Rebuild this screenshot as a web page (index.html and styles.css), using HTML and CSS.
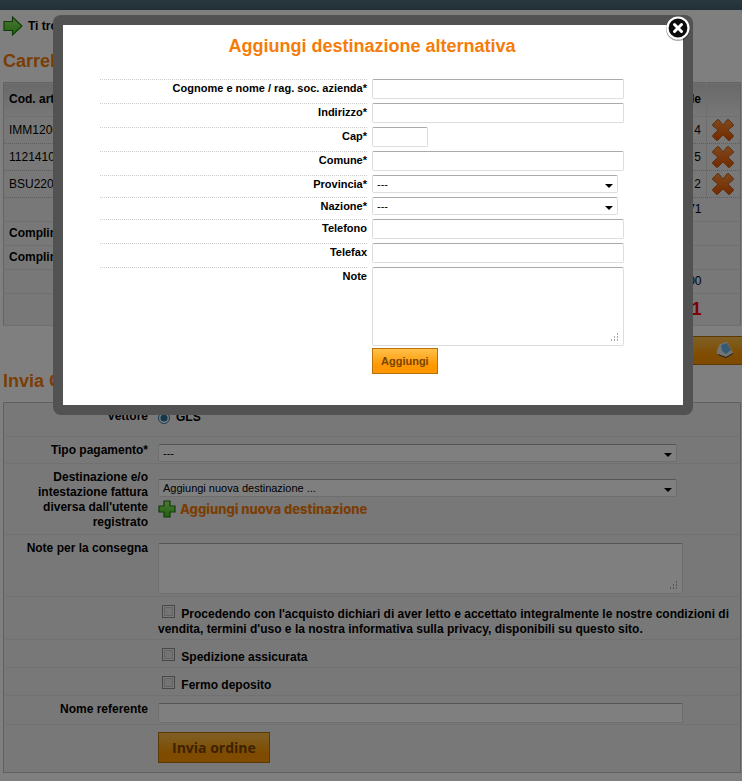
FILE: index.html
```html
<!DOCTYPE html>
<html lang="it">
  <head>
    <meta charset="UTF-8" />
    <meta name="viewport" content="width=device-width, initial-scale=1" />
    <title>Carrello</title>
    <link rel="stylesheet" href="styles.css">
  </head>
  <body>

    <svg class="sprite" aria-hidden="true">
      <defs>
        <linearGradient id="crossFill" x1="0" y1="0" x2="0" y2="1">
          <stop offset="0" stop-color="#ff9038" />
          <stop offset="1" stop-color="#e85400" />
        </linearGradient>
        <linearGradient id="greenFill" x1="0" y1="0" x2="0" y2="1">
          <stop offset="0" stop-color="#a0f070" />
          <stop offset="1" stop-color="#3fc41c" />
        </linearGradient>
        <symbol id="cross" viewBox="0 0 24 24">
          <path d="M6 2 Q7 1 8 2 L12 7 L16 2 Q17 1 18 2 L22 6 Q23 7 22 8 L17 12 L22 17 Q23 18 22 19 L19 22 Q18 23 17 22 L12 17 L7 22 Q6 23 5 22 L2 19 Q1 18 2 17 L7 12 L2 8 Q1 7 2 6 Z" fill="url(#crossFill)" stroke="#b8682c" />
        </symbol>
      </defs>
    </svg>

    <div class="topbar"></div>

    <div class="content">
      <div class="breadcrumb">
        <svg width="20" height="20" viewBox="0 0 20 20">
          <path d="M1 5.500 H9.500 V1 L19 10 L9.500 19 V14.500 H1 Z" fill="url(#greenFill)" stroke="#1f7a12" stroke-width="1.200" />
        </svg>
        <span>Ti trovi in: Carrello</span>
      </div>

      <h1>Carrello</h1>

      <table class="cart">
        <thead>
          <tr>
            <th>Cod. articolo</th>
            <th class="price">Totale</th>
            <th class="remove"></th>
          </tr>
        </thead>
        <tbody>
          <tr class="item">
            <td>IMM1206</td>
            <td class="price">4</td>
            <td class="remove"><button type="button" aria-label="Elimina"><svg width="24" height="24"><use href="#cross" /></svg></button></td>
          </tr>
          <tr class="item">
            <td>1121410</td>
            <td class="price">5</td>
            <td class="remove"><button type="button" aria-label="Elimina"><svg width="24" height="24"><use href="#cross" /></svg></button></td>
          </tr>
          <tr class="item">
            <td>BSU220</td>
            <td class="price">2</td>
            <td class="remove"><button type="button" aria-label="Elimina"><svg width="24" height="24"><use href="#cross" /></svg></button></td>
          </tr>
          <tr><td></td><td class="price">71</td><td></td></tr>
          <tr><th>Complimenti</th><td></td><td></td></tr>
          <tr><th>Complimenti</th><td></td><td></td></tr>
          <tr><td></td><td class="price">00</td><td></td></tr>
          <tr class="total"><td></td><td class="price">1</td><td></td></tr>
        </tbody>
      </table>

      <div class="cart-actions">
        <button type="button" class="btn print" aria-label="Stampa">
          <svg width="18" height="18" viewBox="0 0 18 18">
            <path d="M1 9 L4 3 L11 1 L17 12 L10 16 L1 13 Z" fill="#e4e8ee" />
            <path d="M5 4 L11 2 L15 9 L10 13 L6 10 Z" fill="#6fb4e6" />
            <path d="M2 13 L10 16 L17 12 V13 L10 17 L2 14 Z" fill="#39424e" />
          </svg>
        </button>
      </div>

      <h1>Invia Ordine</h1>

      <form class="order">
        <div class="row row-carrier">
          <span class="label">Vettore</span>
          <div class="field"><label class="radio"><input type="radio" name="vettore" checked> GLS</label></div>
        </div>
        <div class="row">
          <label class="label" for="pagamento">Tipo pagamento*</label>
          <div class="field"><select id="pagamento"><option>---</option></select></div>
        </div>
        <div class="row row-dest">
          <label class="label" for="destinazione">Destinazione e/o intestazione fattura diversa dall'utente registrato</label>
          <div class="field">
            <select id="destinazione"><option>Aggiungi nuova destinazione ...</option></select>
            <a href="#" class="add">
              <svg width="18" height="18" viewBox="0 0 18 18">
                <path d="M6 1 H12 V6 H17 V12 H12 V17 H6 V12 H1 V6 H6 Z" fill="url(#greenFill)" stroke="#1f7a12" stroke-width="1.200" />
              </svg>
              Aggiungi nuova destinazione
            </a>
          </div>
        </div>
        <div class="row row-notes">
          <label class="label" for="consegna">Note per la consegna</label>
          <div class="field"><div class="area"><textarea id="consegna"></textarea><svg class="grip" width="9" height="9" viewBox="0 0 9 9"><path d="M7 0h1v2h-1zM7 3h1v2h-1zM4 3h1v2h-1zM7 6h1v2h-1zM4 6h1v2h-1zM1 6h1v2h-1z" /></svg></div></div>
        </div>
        <div class="row row-check">
          <span class="label"></span>
          <div class="field"><label><input type="checkbox"> Procedendo con l'acquisto dichiari di aver letto e accettato integralmente le nostre condizioni di vendita, termini d'uso e la nostra informativa sulla privacy, disponibili su questo sito.</label></div>
        </div>
        <div class="row row-check">
          <span class="label"></span>
          <div class="field"><label><input type="checkbox"> Spedizione assicurata</label></div>
        </div>
        <div class="row row-check">
          <span class="label"></span>
          <div class="field"><label><input type="checkbox"> Fermo deposito</label></div>
        </div>
        <div class="row">
          <label class="label" for="referente">Nome referente</label>
          <div class="field"><input type="text" id="referente"></div>
        </div>
        <div class="row row-submit">
          <span class="label"></span>
          <div class="field"><button type="submit" class="btn submit">Invia ordine</button></div>
        </div>
      </form>
    </div>

    <div class="overlay">
      <div class="modal" role="dialog" aria-labelledby="modalTitle">
        <button type="button" class="close" aria-label="Chiudi">
          <svg width="26" height="26" viewBox="0 0 26 26">
            <circle cx="13" cy="14" r="12" fill="#000" opacity="0.350" />
            <circle cx="13" cy="13" r="10.500" fill="#0c0c0c" stroke="#fff" stroke-width="2.200" />
            <path d="M9.500 9.500 L16.500 16.500 M16.500 9.500 L9.500 16.500" stroke="#fff" stroke-width="3" stroke-linecap="round" />
          </svg>
        </button>
        <form class="modal-body">
          <h2 id="modalTitle">Aggiungi destinazione alternativa</h2>
          <div class="line">
            <label for="nome">Cognome e nome / rag. soc. azienda*</label>
            <input type="text" id="nome">
          </div>
          <div class="line">
            <label for="indirizzo">Indirizzo*</label>
            <input type="text" id="indirizzo">
          </div>
          <div class="line">
            <label for="cap">Cap*</label>
            <input type="text" id="cap" class="short">
          </div>
          <div class="line">
            <label for="comune">Comune*</label>
            <input type="text" id="comune">
          </div>
          <div class="line">
            <label for="provincia">Provincia*</label>
            <select id="provincia"><option>---</option></select>
          </div>
          <div class="line">
            <label for="nazione">Nazione*</label>
            <select id="nazione"><option>---</option></select>
          </div>
          <div class="line">
            <label for="telefono">Telefono</label>
            <input type="text" id="telefono">
          </div>
          <div class="line">
            <label for="telefax">Telefax</label>
            <input type="text" id="telefax">
          </div>
          <div class="line">
            <label for="note">Note</label>
            <div class="area"><textarea id="note"></textarea><svg class="grip" width="9" height="9" viewBox="0 0 9 9"><path d="M7 0h1v2h-1zM7 3h1v2h-1zM4 3h1v2h-1zM7 6h1v2h-1zM4 6h1v2h-1zM1 6h1v2h-1z" /></svg></div>
          </div>
          <div class="line">
            <span></span>
            <button type="submit" class="btn">Aggiungi</button>
          </div>
        </form>
      </div>
    </div>

  </body>
</html>
```
FILE: styles.css
```css
* {
  box-sizing: border-box;
}

body {
  margin: 0;
  font-family: Arial, "Liberation Sans", sans-serif;
  font-size: 12px;
  line-height: 15px;
  color: #000;
  background-color: #fff;
}

.sprite {
  position: absolute;
  width: 0;
  height: 0;
}

.topbar {
  height: 10px;
  background: linear-gradient(#52707f, #465f6c);
}

.content {
  padding: 6px 1px 8px 3px;
}

h1, h2 {
  margin: 0;
  font-size: 18px;
  line-height: 20px;
  color: #f57c0a;
}

/* Breadcrumb */
.breadcrumb {
  display: flex;
  align-items: center;
  gap: 5px;
  height: 20px;
  margin-bottom: 15px;
  font-weight: bold;
}

/* Cart table */
.cart {
  width: 100%;
  margin: 11px 0 10px;
  border-collapse: collapse;
  border: 1px solid #c8c8c8;
  background-color: #f0f0f0;
}

.cart th, .cart td {
  height: 24px;
  padding: 0 5px;
  text-align: left;
  border-bottom: 1px solid #dedede;
}

.cart thead th {
  height: 34px;
  background: linear-gradient(#d2d2d2, #f0f0f0);
}

.cart .item td {
  height: 27px;
  border-bottom: 1px dotted #bbb;
}

.cart .price {
  text-align: right;
}

.cart .remove {
  width: 34px;
  padding: 0 4px;
  border-left: 1px solid #ddd;
}

.cart .remove button {
  display: block;
  padding: 0;
  border: 0;
  background: none;
}

.cart .remove svg {
  display: block;
}

.cart .total td {
  height: 32px;
}

.cart .total .price {
  font-size: 18px;
  font-weight: bold;
  color: #f00;
}

.cart-actions {
  display: flex;
  justify-content: flex-end;
  margin: 0 -1px 6px 0;
}

/* Buttons */
.btn {
  padding: 0 8px;
  height: 26px;
  border: 1px solid #b87008;
  font-family: inherit;
  font-size: 11px;
  font-weight: bold;
  color: #7a4400;
  background: linear-gradient(#ffc04a, #ff9700 70%);
}

.btn.print {
  width: 200px;
  height: 29px;
  border-width: 1px 0;
  text-align: right;
}

.btn.submit {
  height: 31px;
  padding: 0 13px;
  font-family: Verdana, "Open Sans", sans-serif;
  font-size: 14px;
}

/* Controls */
input[type="text"], select, textarea {
  display: block;
  width: 100%;
  margin: 0;
  padding: 0 4px;
  border: 1px solid #ddd;
  border-top-color: #aaa;
  border-radius: 2px;
  background-color: #fff;
  font-family: inherit;
  font-size: 11px;
  color: #000;
}

input[type="text"] {
  height: 20px;
}

textarea {
  resize: none;
}

select {
  height: 18px;
  appearance: none;
  background-image: url("data:image/svg+xml,%3Csvg xmlns='http://www.w3.org/2000/svg' width='8' height='4'%3E%3Cpath d='M0 0h8L4 4z'/%3E%3C/svg%3E");
  background-repeat: no-repeat;
  background-position: right 4px top 8px;
}

input[type="checkbox"] {
  appearance: none;
  width: 13px;
  height: 13px;
  margin: 0 3px 0 4px;
  border: 1px solid #8e8f8f;
  box-shadow: inset 0 0 0 1px #f4f4f4, inset 0 0 0 2px #c4c8cc;
  background: #e8e8e8;
}

.area {
  position: relative;
}

.grip {
  position: absolute;
  right: 5px;
  bottom: 4px;
  fill: #aaa;
}

/* Order form */
.order {
  margin-top: 11px;
  padding: 0 1px 1px;
  border: 1px solid #c0c0c0;
  background-color: #f0f0f0;
}

.row {
  display: grid;
  grid-template-columns: 151px 1fr;
  font-weight: bold;
  border-bottom: 1px solid #e2e2e2;
}

.row:last-child {
  border-bottom: 0;
}

.label {
  padding: 6px 8px 4px 12px;
  text-align: right;
}

.field {
  padding: 7px 4px 1px 2px;
}

.field select {
  width: calc(100% - 58px);
}

.field input[type="text"], .field .area {
  width: calc(100% - 52px);
}

.field textarea {
  height: 51px;
}

.row-carrier {
  height: 34px;
}

.radio {
  display: flex;
  align-items: center;
  gap: 6px;
}

.radio input {
  width: 12px;
  height: 12px;
  margin: 0;
  accent-color: #2a6f9a;
}

.row-dest .field {
  padding-top: 15px;
}

.add {
  display: flex;
  align-items: center;
  gap: 4px;
  margin-top: 3px;
  font-family: "Arial Black", Inter, sans-serif;
  font-size: 13px;
  font-weight: 800;
  color: #f57c0a;
  text-decoration: none;
}

.row-notes .field {
  padding: 8px 4px 2px 2px;
}

.row-check .field {
  padding: 8px 4px 2px 2px;
}

.row-submit .field {
  padding-bottom: 8px;
}

/* Modal */
.overlay {
  position: fixed;
  inset: 0;
  padding: 15px 49px 0 53px;
  background-color: rgba(0, 0, 0, 0.5);
}

.modal {
  position: relative;
  padding: 10px;
  border-radius: 8px;
  background-color: #525252;
}

.close {
  position: absolute;
  top: 0;
  right: 2px;
  padding: 0;
  border: 0;
  background: none;
}

.close svg {
  display: block;
}

.modal-body {
  padding: 11px 59px 27px 37px;
  background-color: #fff;
}

.modal-body h2 {
  margin: 0 0 23px 20px;
  text-align: center;
}

.line {
  display: grid;
  grid-template-columns: 267px 1fr;
  column-gap: 5px;
  align-items: start;
  margin-bottom: 4px;
}

.line label {
  padding-top: 1px;
  border-top: 1px dotted #ccc;
  font-size: 11px;
  font-weight: bold;
  text-align: right;
}

.line select {
  width: calc(100% - 6px);
}

.line input.short {
  width: 56px;
}

.line textarea {
  height: 79px;
}

.line .area {
  margin-bottom: -2px;
}

.line .btn {
  justify-self: start;
}
```
